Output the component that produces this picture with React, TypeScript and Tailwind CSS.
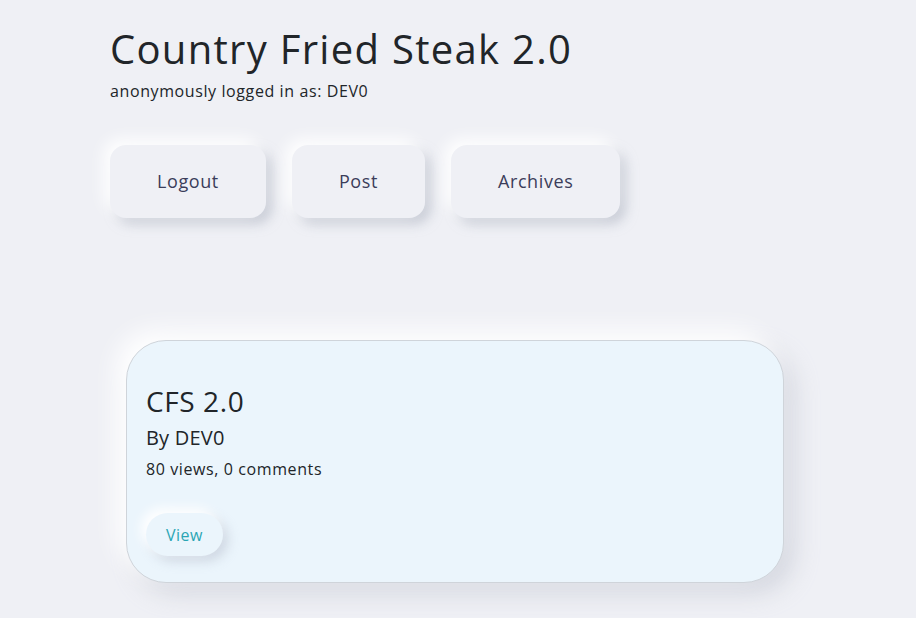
export default function App() {
  const font = { fontFamily: '"Open Sans", "Noto Sans", sans-serif' };

  return (
    <div className="min-h-screen bg-[#eff0f5] text-[#212529]" style={font}>
      <div className="pl-[110px] pt-[23px]">
        {/* Header */}
        <h1 className="text-[40px] leading-[52px] font-normal tracking-[1.3px] text-[#212529]">Country Fried Steak 2.0</h1>
        <p className="text-[16px] leading-[24px] mt-[4px] tracking-[0.6px] text-[#212529]">anonymously logged in as: DEV0</p>

        {/* Nav buttons */}
        <div className="flex gap-[26px] mt-[42px]">
          {['Logout', 'Post', 'Archives'].map((label) => (
            <button
              key={label}
              className="h-[73px] px-[47px] rounded-[16px] bg-[#eff0f5] text-[18px] tracking-[0.6px] text-[#3b3d5a] shadow-[-6px_-6px_16px_#ffffff,6px_6px_12px_rgba(170,174,190,0.55)]"
            >
              {label}
            </button>
          ))}
        </div>

        {/* Post card */}
        <div className="ml-[16px] mt-[122px] w-[658px] h-[243px] rounded-[40px] border border-[#cfd4da] bg-[#ebf5fc] pl-[19px] pt-[40px] shadow-[-10px_-10px_24px_#ffffff,10px_10px_24px_rgba(180,184,198,0.45)]">
          <h2 className="text-[28px] leading-[40px] font-medium tracking-[0.6px] text-[#212529]">CFS 2.0</h2>
          <h3 className="text-[20px] leading-[30px] mt-[2px] font-medium tracking-[0.2px] text-[#212529]">By DEV0</h3>
          <p className="text-[16px] leading-[24px] mt-[4px] tracking-[0.6px] text-[#212529]">80 views, 0 comments</p>
          <button className="mt-[32px] h-[43px] px-[20px] rounded-[22px] bg-[#ebf5fc] text-[16px] tracking-[0.5px] text-[#2aa5b4] shadow-[-5px_-5px_12px_#ffffff,5px_5px_12px_rgba(170,178,196,0.45)]">
            View
          </button>
        </div>
      </div>
    </div>
  );
}
